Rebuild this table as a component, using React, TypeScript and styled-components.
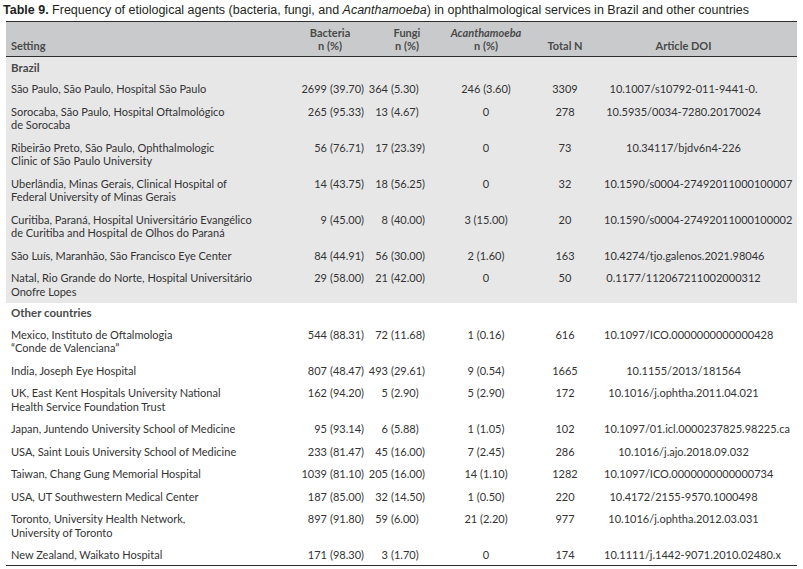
import styled, { createGlobalStyle } from "styled-components";

const GlobalStyle = createGlobalStyle`
  body {
    margin: 0;
    background: #ffffff;
  }
`;

const Page = styled.div`
  width: 803px;
  padding: 3px 6px 0 6px;
  box-sizing: border-box;
`;

const Caption = styled.div`
  font-family: "Liberation Sans", Arial, sans-serif;
  font-size: 12.5px;
  line-height: 14px;
  color: #231f20;
  margin-left: -3px;
  margin-bottom: 4px;
  white-space: nowrap;
  b {
    font-weight: 700;
  }
`;

const Table = styled.table`
  width: 791px;
  border-collapse: collapse;
  table-layout: fixed;
  font-family: Lato, "Open Sans", sans-serif;
  font-size: 11px;
  color: #333333;
`;

const HeadRow = styled.tr`
  background: #c9cacc;
  border-top: 1.5px solid #2e2e2e;
  border-bottom: 1.5px solid #2e2e2e;
`;

const Th = styled.th<{ $align?: string; $pr?: number }>`
  font-weight: 700;
  color: #4a4a4a;
  text-align: ${(p) => p.$align || "center"};
  vertical-align: bottom;
  padding: 4px ${(p) => p.$pr ?? 0}px 4px ${(p) => (p.$align === "left" ? 5 : 0)}px;
  line-height: 13px;
  height: 26px;
  box-sizing: content-box;
  i {
    font-style: italic;
  }
`;

const Group = styled.tbody<{ $shade?: boolean }>`
  background: ${(p) => (p.$shade ? "#e7e7e8" : "#ffffff")};
`;

const SectionCell = styled.td`
  font-weight: 700;
  color: #4a4a4a;
  font-size: 11.5px;
  padding: 3.5px 5px;
  line-height: 13.5px;
`;

const Td = styled.td<{ $align?: string; $pr?: number }>`
  text-align: ${(p) => p.$align || "center"};
  vertical-align: top;
  padding: 4.5px ${(p) => p.$pr ?? 0}px 4.5px ${(p) => (p.$align === "left" ? 5 : 0)}px;
  line-height: 13.5px;
  white-space: nowrap;
`;

const NumTd = styled(Td)`
  padding-left: 0;
`;

const Count = styled.span<{ $w: number }>`
  display: inline-block;
  width: ${(p) => p.$w}px;
  text-align: right;
  margin-right: 3px;
`;

const Last = styled.tr`
  border-bottom: 1.5px solid #2e2e2e;
  td {
    padding-bottom: 3px;
  }
`;

type Row = {
  setting: string[];
  bac: [string, string];
  fun: [string, string];
  aca: string;
  total: string;
  doi: string;
};

const brazil: Row[] = [
  { setting: ["São Paulo, São Paulo, Hospital São Paulo"], bac: ["2699", "(39.70)"], fun: ["364", "(5.30)"], aca: "246 (3.60)", total: "3309", doi: "10.1007/s10792-011-9441-0." },
  { setting: ["Sorocaba, São Paulo, Hospital Oftalmológico", "de Sorocaba"], bac: ["265", "(95.33)"], fun: ["13", "(4.67)"], aca: "0", total: "278", doi: "10.5935/0034-7280.20170024" },
  { setting: ["Ribeirão Preto, São Paulo, Ophthalmologic", "Clinic of São Paulo University"], bac: ["56", "(76.71)"], fun: ["17", "(23.39)"], aca: "0", total: "73", doi: "10.34117/bjdv6n4-226" },
  { setting: ["Uberlândia, Minas Gerais, Clinical Hospital of", "Federal University of Minas Gerais"], bac: ["14", "(43.75)"], fun: ["18", "(56.25)"], aca: "0", total: "32", doi: "10.1590/s0004-27492011000100007" },
  { setting: ["Curitiba, Paraná, Hospital Universitário Evangélico", "de Curitiba and Hospital de Olhos do Paraná"], bac: ["9", "(45.00)"], fun: ["8", "(40.00)"], aca: "3 (15.00)", total: "20", doi: "10.1590/s0004-27492011000100002" },
  { setting: ["São Luís, Maranhão, São Francisco Eye Center"], bac: ["84", "(44.91)"], fun: ["56", "(30.00)"], aca: "2 (1.60)", total: "163", doi: "10.4274/tjo.galenos.2021.98046" },
  { setting: ["Natal, Rio Grande do Norte, Hospital Universitário", "Onofre Lopes"], bac: ["29", "(58.00)"], fun: ["21", "(42.00)"], aca: "0", total: "50", doi: "0.1177/112067211002000312" },
];

const others: Row[] = [
  { setting: ["Mexico, Instituto de Oftalmologia", "“Conde de Valenciana”"], bac: ["544", "(88.31)"], fun: ["72", "(11.68)"], aca: "1 (0.16)", total: "616", doi: "10.1097/ICO.0000000000000428" },
  { setting: ["India, Joseph Eye Hospital"], bac: ["807", "(48.47)"], fun: ["493", "(29.61)"], aca: "9 (0.54)", total: "1665", doi: "10.1155/2013/181564" },
  { setting: ["UK, East Kent Hospitals University National", "Health Service Foundation Trust"], bac: ["162", "(94.20)"], fun: ["5", "(2.90)"], aca: "5 (2.90)", total: "172", doi: "10.1016/j.ophtha.2011.04.021" },
  { setting: ["Japan, Juntendo University School of Medicine"], bac: ["95", "(93.14)"], fun: ["6", "(5.88)"], aca: "1 (1.05)", total: "102", doi: "10.1097/01.icl.0000237825.98225.ca" },
  { setting: ["USA, Saint Louis University School of Medicine"], bac: ["233", "(81.47)"], fun: ["45", "(16.00)"], aca: "7 (2.45)", total: "286", doi: "10.1016/j.ajo.2018.09.032" },
  { setting: ["Taiwan, Chang Gung Memorial Hospital"], bac: ["1039", "(81.10)"], fun: ["205", "(16.00)"], aca: "14 (1.10)", total: "1282", doi: "10.1097/ICO.0000000000000734" },
  { setting: ["USA, UT Southwestern Medical Center"], bac: ["187", "(85.00)"], fun: ["32", "(14.50)"], aca: "1 (0.50)", total: "220", doi: "10.4172/2155-9570.1000498" },
  { setting: ["Toronto, University Health Network,", "University of Toronto"], bac: ["897", "(91.80)"], fun: ["59", "(6.00)"], aca: "21 (2.20)", total: "977", doi: "10.1016/j.ophtha.2012.03.031" },
  { setting: ["New Zealand, Waikato Hospital"], bac: ["171", "(98.30)"], fun: ["3", "(1.70)"], aca: "0", total: "174", doi: "10.1111/j.1442-9071.2010.02480.x" },
];

function DataRow({ row }: { row: Row }) {
  return (
    <>
      <Td $align="left">
        {row.setting.map((line, i) => (
          <div key={i}>{line}</div>
        ))}
      </Td>
      <NumTd $align="left">
        <Count $w={35}>{row.bac[0]}</Count>
        {row.bac[1]}
      </NumTd>
      <NumTd $align="left">
        <Count $w={20}>{row.fun[0]}</Count>
        {row.fun[1]}
      </NumTd>
      <Td>{row.aca}</Td>
      <Td>{row.total}</Td>
      <Td $pr={34}>{row.doi}</Td>
    </>
  );
}

export default function App() {
  return (
    <Page>
      <GlobalStyle />
      <Caption>
        <b>Table 9.</b> Frequency of etiological agents (bacteria, fungi, and{" "}
        <i>Acanthamoeba</i>) in ophthalmological services in Brazil and other countries
      </Caption>
      <Table>
        <colgroup>
          <col style={{ width: 286 }} />
          <col style={{ width: 76 }} />
          <col style={{ width: 78 }} />
          <col style={{ width: 80 }} />
          <col style={{ width: 78 }} />
          <col style={{ width: 193 }} />
        </colgroup>
        <thead>
          <HeadRow>
            <Th $align="left">Setting</Th>
            <Th>
              Bacteria
              <br />n (%)
            </Th>
            <Th>
              Fungi
              <br />n (%)
            </Th>
            <Th>
              <i>Acanthamoeba</i>
              <br />n (%)
            </Th>
            <Th>Total N</Th>
            <Th $pr={34}>Article DOI</Th>
          </HeadRow>
        </thead>
        <Group $shade>
          <tr>
            <SectionCell colSpan={6}>Brazil</SectionCell>
          </tr>
          {brazil.map((row, i) => (
            <tr key={i}>
              <DataRow row={row} />
            </tr>
          ))}
        </Group>
        <Group>
          <tr>
            <SectionCell colSpan={6}>Other countries</SectionCell>
          </tr>
          {others.map((row, i) =>
            i === others.length - 1 ? (
              <Last key={i}>
                <DataRow row={row} />
              </Last>
            ) : (
              <tr key={i}>
                <DataRow row={row} />
              </tr>
            )
          )}
        </Group>
      </Table>
    </Page>
  );
}
